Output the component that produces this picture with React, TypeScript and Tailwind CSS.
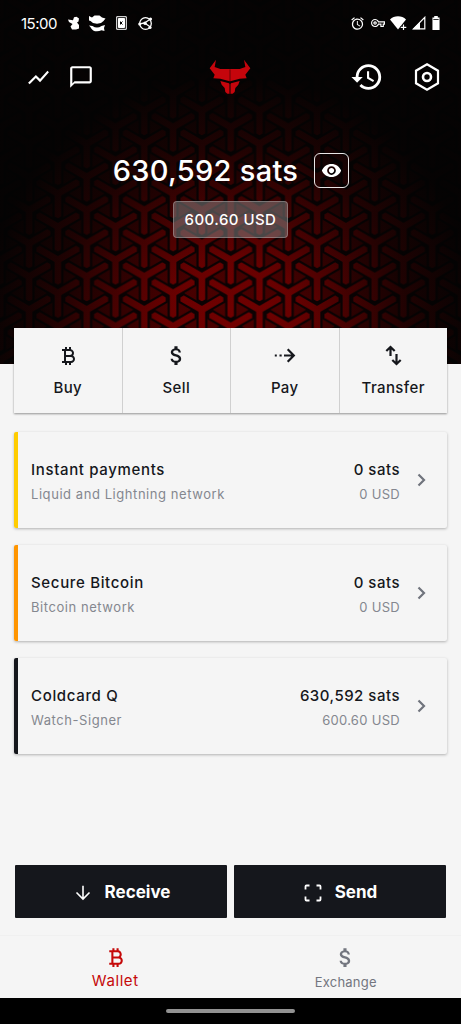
import React from "react";
import { MdShowChart, MdHistory, MdVisibility, MdChatBubbleOutline, MdAlarm, MdCurrencyBitcoin, MdAttachMoney, MdOutlineVpnKey } from "react-icons/md";

const Y_SHAPE =
  "M4.4 2.54V23.5L0 26L-4.4 23.5V2.54L-22.55 -7.94L-22.52 -13L-18.15 -15.56L0 -5.08L18.15 -15.56L22.52 -13L22.55 -7.94Z";
const Y_POINTS: [number, number][] = [
  [0, -33.2], [57.6, -33.2], [28.8, -16.6], [0, 0], [57.6, 0], [28.8, 16.6], [0, 33.2], [57.6, 33.2], [28.8, 49.8],
];

function WeaveBackground() {
  return (
    <svg className="absolute inset-0 h-full w-full" viewBox="0 0 461 364" preserveAspectRatio="none" aria-hidden="true">
      <defs>
        <pattern id="weave" x="230.7" y="260" width="57.6" height="33.2" patternUnits="userSpaceOnUse">
          <rect width="57.6" height="33.2" fill="#500000" />
          {Y_POINTS.map(([x, y]) => (
            <path key={`${x},${y}`} d={Y_SHAPE} transform={`translate(${x} ${y})`} fill="#780000" stroke="#0b0203" strokeWidth="2.2" />
          ))}
        </pattern>
        <radialGradient id="shade" gradientUnits="userSpaceOnUse" cx="0" cy="0" r="1" gradientTransform="translate(230 335) scale(250 262)">
          <stop offset="0" stopColor="#030303" stopOpacity="0.04" />
          <stop offset="0.28" stopColor="#030303" stopOpacity="0.14" />
          <stop offset="0.5" stopColor="#030303" stopOpacity="0.46" />
          <stop offset="0.72" stopColor="#030303" stopOpacity="0.76" />
          <stop offset="1" stopColor="#030303" stopOpacity="0.98" />
        </radialGradient>
      </defs>
      <rect width="461" height="364" fill="url(#weave)" />
      <rect width="461" height="364" fill="url(#shade)" />
    </svg>
  );
}

function StatusBar() {
  return (
    <div className="flex h-[46px] items-center justify-between pr-[20px] pl-[21px] text-white">
      <div className="flex items-center">
        <span className="w-[46px] pt-[2px] text-[15px] tracking-[-0.5px]">15:00</span>
        <svg width="14" height="14" viewBox="0 0 14 14" fill="currentColor">
          <path d="M1 3.500l5 .8 1-3L9.500.8l2.500 1.700-.5 3-1.500 1 2 2.500v3.500L9 13.500H5L3.500 10.500l2-2.500-3.500-2z" />
        </svg>
        <svg className="ml-[7px]" width="18" height="18" viewBox="0 0 18 18" fill="currentColor">
          <path d="M1 2l3 1.500 2.500-2h5L14 3.500l3.500 1L15.500 7l-2.500 2-4 .8L5 9 2.500 7 1 6.500zM1 11.500l3.500.5c3 2 6 2 9 0l3.500-1-1 3 .500 3-3-.8c-4 2-9 1.500-11-3z" />
        </svg>
        <svg className="ml-[10px]" width="11" height="14" viewBox="0 0 11 14" fill="none" stroke="currentColor">
          <path d="M.7.7h9.600v12.600H.7z" strokeWidth="1" />
          <path d="M2.500 2.500h6v9h-6z" fill="currentColor" />
          <path d="M4.500 5.500v3M6.500 5.500L5 7l1.500 1.500" stroke="#000" strokeWidth="1" />
        </svg>
        <svg className="ml-[11px]" width="15" height="15" viewBox="0 0 15 15" fill="none" stroke="currentColor" strokeWidth="1.300">
          <circle cx="7.500" cy="7.500" r="5.800" />
          <path d="M1.500 8l5-1 6-4M6.500 7l6 4" />
          <g fill="currentColor" stroke="none"><circle cx="1.700" cy="8" r="1.500" /><circle cx="7" cy="7.300" r="1.700" /><circle cx="12.500" cy="3" r="1.600" /><circle cx="12" cy="11.500" r="1.600" /></g>
        </svg>
      </div>
      <div className="flex items-center">
        <MdAlarm size={15} />
        <MdOutlineVpnKey size={14} className="ml-[6px]" />
        <svg className="ml-[5px]" width="17" height="14" viewBox="0 0 17 14">
          <path d="M0 3.500C4-.7 12-.7 16 3.500L8 13.500z" fill="currentColor" />
          <path d="M13.500 8.500v6M10.500 11.500h6" stroke="#000" strokeWidth="3" />
          <path d="M13.500 8.500v5.500M10.700 11.300h5.600" stroke="currentColor" strokeWidth="1.200" />
        </svg>
        <svg className="ml-[5px]" width="14" height="14" viewBox="0 0 14 14">
          <path d="M1.500 12.800L12.800 1.300v11.500z" fill="none" stroke="currentColor" strokeWidth="1.200" />
          <path d="M.5 13.300L8 6v7.300z" fill="currentColor" />
        </svg>
        <svg className="mr-[1px] ml-[6px]" width="8" height="14" viewBox="0 0 9 14" preserveAspectRatio="none">
          <path d="M2.500 0h4v1.500h2V14h-8V1.500h2z" fill="currentColor" />
          <path d="M1.500 3h6v1h-6z" fill="#333" />
        </svg>
      </div>
    </div>
  );
}

function BullLogo() {
  return (
    <svg width="42" height="36" viewBox="28 29 126 108" fill="#c5050c">
      <path d="M49 31L45 53L62 59H120L137 53L133 31L152 57L137 76L141 87L120 88L92 96H90L62 88L41 87L45 76L30 57Z" />
      <path d="M62 95L88 102L90 105V133H83L77 128L75 116L66 106ZM120 95L94 102L92 105V133H99L105 128L107 116L116 106Z" />
      <path d="M91 60V133" stroke="#180202" strokeWidth="1.600" fill="none" />
    </svg>
  );
}

function HexIcon() {
  return (
    <svg width="28" height="30" viewBox="0 0 28 30" fill="none" stroke="currentColor">
      <path d="M14 2.300L25 8.700V21.300L14 27.700L3 21.300V8.700Z" strokeWidth="2.200" />
      <circle cx="14" cy="15" r="4" strokeWidth="2.600" />
    </svg>
  );
}

function PayIcon() {
  return (
    <svg width="22" height="22" viewBox="0 0 22 22" fill="none" stroke="currentColor" strokeWidth="2.200">
      <path d="M.8 10.500h2M5.500 10.500h2.200M10 10.500h10M13.700 4.300L19.800 10.500l-6.100 6.200" />
    </svg>
  );
}

function TransferIcon() {
  return (
    <svg width="20" height="22" viewBox="0 0 20 22" fill="none" stroke="currentColor" strokeWidth="2.200">
      <path d="M7.500 11V2.500M3.300 6L7.500 2l4.200 4M13.500 9v9.500M9.300 15l4.200 4 4.200-4" />
    </svg>
  );
}

function Chevron() {
  return (
    <svg width="24" height="24" viewBox="0 0 24 24" fill="none" stroke="currentColor" strokeWidth="2.200" className="ml-[9px] text-[#70747d]">
      <path d="M9.500 6.500L15 12l-5.500 5.500" />
    </svg>
  );
}

const actions = [
  { label: "Buy", icon: <MdCurrencyBitcoin size={24} /> },
  { label: "Sell", icon: <MdAttachMoney size={25} /> },
  { label: "Pay", icon: <PayIcon /> },
  { label: "Transfer", icon: <TransferIcon /> },
];

type Wallet = { name: string; network: string; sats: string; fiat: string; bar: string };
const wallets: Wallet[] = [
  { name: "Instant payments", network: "Liquid and Lightning network", sats: "0 sats", fiat: "0 USD", bar: "bg-[#ffcc00]" },
  { name: "Secure Bitcoin", network: "Bitcoin network", sats: "0 sats", fiat: "0 USD", bar: "bg-[#ff9500]" },
  { name: "Coldcard Q", network: "Watch-Signer", sats: "630,592 sats", fiat: "600.60 USD", bar: "bg-[#15171c]" },
];

function WalletCard({ name, network, sats, fiat, bar }: Wallet) {
  return (
    <div className="flex h-[96px] items-center overflow-hidden rounded-[2px] bg-[#f5f5f5] pr-[14px] shadow-[0_1px_3px_rgba(0,0,0,0.28)]">
      <div className={`h-full w-[4px] ${bar}`} />
      <div className="ml-[13px] flex-1 pt-[4px]">
        <div className="text-[15px] leading-[24px] font-medium tracking-[0.66px] text-[#15171c]">{name}</div>
        <div className="text-[13px] leading-[24px] tracking-[0.56px] text-[#84878f]">{network}</div>
      </div>
      <div className="pt-[4px] text-right">
        <div className="text-[15px] leading-[24px] font-medium tracking-[0.5px] text-[#15171c]">{sats}</div>
        <div className="text-[13px] leading-[24px] tracking-[0.3px] text-[#84878f]">{fiat}</div>
      </div>
      <Chevron />
    </div>
  );
}

export default function App() {
  return (
    <div className="flex h-[1024px] w-[461px] flex-col overflow-hidden bg-[#f5f5f5] font-['Inter',sans-serif]">
      <header className="relative h-[364px] shrink-0 bg-black">
        <WeaveBackground />
        <div className="relative flex flex-col">
          <StatusBar />
          <div className="grid h-[62px] grid-cols-3 items-center text-white">
            <div className="flex items-center pl-[26px]">
              <MdShowChart size={25} />
              <MdChatBubbleOutline size={26} className="ml-[17px]" />
            </div>
            <div className="flex justify-center"><BullLogo /></div>
            <div className="flex items-center justify-end pr-[20px]">
              <MdHistory size={34} className="mr-[29px]" />
              <HexIcon />
            </div>
          </div>
          <div className="mt-[45px] flex items-center justify-center pl-px text-white">
            <span className="pt-px text-[29px] leading-[34px] font-medium tracking-[0.3px]">630,592 sats</span>
            <button className="ml-[16px] flex h-[35px] w-[35px] items-center justify-center rounded-[6px] border border-white/90" aria-label="Hide balance">
              <MdVisibility size={21} />
            </button>
          </div>
          <div className="mt-[13px] flex justify-center">
            <div className="flex h-[37px] w-[115px] items-center justify-center rounded-[4px] border border-white/25 bg-[#8a8a8a]/50 pt-[2px] text-[15px] font-medium tracking-[0.45px] text-white">
              600.60 USD
            </div>
          </div>
        </div>
      </header>

      <section className="relative z-10 mx-[14px] -mt-[36px] grid h-[85px] shrink-0 grid-cols-4 gap-px bg-[#d0d0d0] shadow-[0_1px_2px_rgba(0,0,0,0.4)]">
        {actions.map((a) => (
          <button key={a.label} className="flex flex-col items-center bg-[#f5f5f5] pt-[16px] text-[#15171c]">
            <span className="flex h-[23px] items-center">{a.icon}</span>
            <span className="mt-[9px] text-[15px] leading-[24px] font-medium tracking-[0.4px]">{a.label}</span>
          </button>
        ))}
      </section>

      <main className="mx-[14px] mt-[19px] flex flex-col gap-[17px]">
        {wallets.map((w) => <WalletCard key={w.name} {...w} />)}
      </main>

      <div className="mx-[15px] mt-auto mb-[17px] grid h-[53px] shrink-0 grid-cols-2 gap-[7px] text-[17px] font-bold text-white">
        <button className="flex items-center justify-center rounded-[1px] bg-[#15171c] pt-[2px] pl-[3px]">
          <svg className="mr-[14px]" width="16" height="16" viewBox="0 0 16 16" fill="none" stroke="currentColor" strokeWidth="1.600"><path d="M8 .8v13.500M1.500 7.500L8 14 14.500 7.500" /></svg>
          Receive
        </button>
        <button className="flex items-center justify-center rounded-[1px] bg-[#15171c] pt-[2px] pl-[1px]">
          <svg className="mr-[13px]" width="18" height="18" viewBox="0 0 18 18" fill="none" stroke="currentColor" strokeWidth="1.800"><path d="M1.500 5.500v-3q0-1 1-1h3M12.500 1.500h3q1 0 1 1v3M16.500 12.500v3q0 1-1 1h-3M5.500 16.500h-3q-1 0-1-1v-3" /></svg>
          Send
        </button>
      </div>
      <nav className="grid h-[63px] shrink-0 grid-cols-2 border-t border-[#f0f0f0] bg-[#f5f5f5]">
        <button className="flex flex-col items-center pt-[9px] text-[#c50909]">
          <MdCurrencyBitcoin size={25} />
          <span className="-mt-px text-[15px] leading-[24px] tracking-[0.6px]">Wallet</span>
        </button>
        <button className="flex flex-col items-center pt-[9px] text-[#73767f]">
          <MdAttachMoney size={25} />
          <span className="text-[13px] leading-[24px] tracking-[0.2px]">Exchange</span>
        </button>
      </nav>
      <footer className="flex h-[26px] shrink-0 items-center justify-center bg-black">
        <div className="h-[4px] w-[129px] rounded-full bg-[#929292]" />
      </footer>
    </div>
  );
}
